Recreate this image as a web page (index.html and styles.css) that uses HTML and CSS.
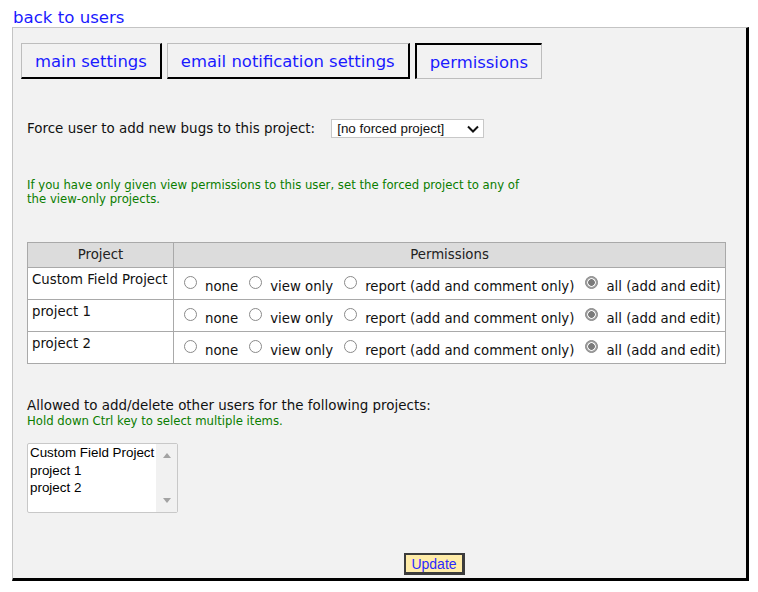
FILE: index.html
```html
<!DOCTYPE html>
<html lang="en">
<head>
<meta charset="utf-8">
<title>Edit user permissions</title>
<link rel="stylesheet" href="styles.css">
</head>
<body>
<div class="back"><a href="#" class="back-link">back to users</a></div>
<div class="panel">
  <div class="tabs">
    <a href="#" class="tab">main settings</a>
    <a href="#" class="tab">email notification settings</a>
    <a href="#" class="tab tab-selected">permissions</a>
  </div>

  <div class="force">
    <span class="force-label">Force user to add new bugs to this project:</span>
    <span class="select-wrap">
      <select class="select">
        <option>[no forced project]</option>
        <option>Custom Field Project</option>
        <option>project 1</option>
        <option>project 2</option>
      </select>
      <svg class="chev" width="12" height="8" viewBox="0 0 12 8"><path d="M1 1.5 L6 6.5 L11 1.5" fill="none" stroke="#111" stroke-width="2"/></svg>
    </span>
  </div>

  <p class="note note-view">If you have only given view permissions to this user, set the forced project to any of the view-only projects.</p>

  <table class="perm">
    <colgroup><col class="col-a"><col class="col-b"></colgroup>
    <thead>
      <tr><th>Project</th><th>Permissions</th></tr>
    </thead>
    <tbody>
      <tr>
        <td class="name">Custom Field Project</td>
        <td class="perms"><label class="opt"><input type="radio" name="p0" class="radio">none</label><label class="opt"><input type="radio" name="p0" class="radio">view only</label><label class="opt"><input type="radio" name="p0" class="radio">report (add and comment only)</label><label class="opt"><input type="radio" name="p0" class="radio" checked>all (add and edit)</label></td>
      </tr>
      <tr>
        <td class="name">project 1</td>
        <td class="perms"><label class="opt"><input type="radio" name="p1" class="radio">none</label><label class="opt"><input type="radio" name="p1" class="radio">view only</label><label class="opt"><input type="radio" name="p1" class="radio">report (add and comment only)</label><label class="opt"><input type="radio" name="p1" class="radio" checked>all (add and edit)</label></td>
      </tr>
      <tr>
        <td class="name">project 2</td>
        <td class="perms"><label class="opt"><input type="radio" name="p2" class="radio">none</label><label class="opt"><input type="radio" name="p2" class="radio">view only</label><label class="opt"><input type="radio" name="p2" class="radio">report (add and comment only)</label><label class="opt"><input type="radio" name="p2" class="radio" checked>all (add and edit)</label></td>
      </tr>
    </tbody>
  </table>

  <div class="allowed">Allowed to add/delete other users for the following projects:</div>
  <div class="note note-ctrl">Hold down Ctrl key to select multiple items.</div>

  <div class="listbox" role="listbox" aria-multiselectable="true">
    <div class="list-items">
      <div class="list-item" role="option">Custom Field Project</div>
      <div class="list-item" role="option">project 1</div>
      <div class="list-item" role="option">project 2</div>
    </div>
    <div class="scrollbar">
      <span class="arrow arrow-up"></span>
      <span class="arrow arrow-down"></span>
    </div>
  </div>

  <div class="actions"><button class="update" type="button">Update</button></div>
</div>
</body>
</html>
```

FILE: styles.css
```css
html, body {
  margin: 0;
  padding: 0;
  background: #ffffff;
}
body {
  font-family: "DejaVu Sans", Verdana, sans-serif;
  font-size: 13.45px;
  color: #111;
  padding-left: 12px;
}
.back {
  height: 27px;
  padding-left: 1px;
  box-sizing: border-box;
  padding-top: 8px;
  font-size: 16.6px;
  line-height: 19px;
}
.back-link {
  color: #1a1aff;
  text-decoration: none;
}
.panel {
  width: 733px;
  height: 550px;
  background: #f2f2f2;
  border-top: 1px solid #c4c4c4;
  border-left: 1px solid #c4c4c4;
  border-right: 3px solid #000;
  border-bottom: 3px solid #000;
}
.tabs {
  display: flex;
  padding: 15px 0 0 8px;
  gap: 5px;
}
.tab {
  box-sizing: border-box;
  height: 36px;
  display: flex;
  align-items: center;
  padding: 2px 13px 0;
  font-size: 16.45px;
  color: #1a1aff;
  text-decoration: none;
  border-top: 1px solid #bdbdbd;
  border-left: 1px solid #bdbdbd;
  border-right: 2px solid #000;
  border-bottom: 2px solid #000;
}
.tab-selected {
  border-top: 2px solid #000;
  border-left: 2px solid #000;
  border-right: 1px solid #bdbdbd;
  border-bottom: 1px solid #bdbdbd;
}
.force {
  display: flex;
  align-items: center;
  margin-top: 40px;
  padding-left: 14px;
}
.force-label {
  line-height: 16px;
}
.select-wrap {
  position: relative;
  margin-left: 16px;
  display: inline-block;
}
.select {
  appearance: none;
  -webkit-appearance: none;
  width: 153px;
  height: 19px;
  border: 1px solid #c8c8c8;
  border-radius: 0;
  background: #fff;
  font-family: "Liberation Sans", Arial, sans-serif;
  font-size: 13.4px;
  color: #111;
  padding: 0 0 0 5px;
  margin: 0;
  display: block;
}
.chev {
  position: absolute;
  right: 5px;
  top: 6px;
  pointer-events: none;
}
.note {
  color: #0a7d00;
  font-size: 11.7px;
  line-height: 13.5px;
}
.note-view {
  margin: 41px 0 0 14px;
  width: 508px;
}
.perm {
  margin: 36px 0 0 14px;
  width: 699px;
  table-layout: fixed;
  border-collapse: collapse;
  line-height: 16px;
  font-size: 13.3px;
}
.col-a {
  width: 146px;
}
.perm th {
  background: #dcdcdc;
  font-weight: normal;
  color: #222;
  padding: 4px 5px;
  border: 1px solid #a9a9a9;
  text-align: center;
}
.perm td {
  background: #fff;
  border: 1px solid #a9a9a9;
  vertical-align: top;
  white-space: nowrap;
}
.perm td.name {
  padding: 4px 2px 4px 4px;
}
.perm td.perms {
  padding: 11px 0 4px 5px;
}
.opt {
  margin-right: 6px;
}
.radio {
  appearance: none;
  -webkit-appearance: none;
  width: 13px;
  height: 13px;
  margin: -4px 8px 2px 5px;
  border: 1px solid #8a8a8a;
  border-radius: 50%;
  background: #fff;
  vertical-align: baseline;
  box-sizing: border-box;
}
.radio:checked {
  border-color: #8a8a8a;
  background: radial-gradient(circle, #7a7a7a 0 3px, #f4f4f4 3.6px 4px, #a0a0a0 4.6px);
}
.allowed {
  margin: 34px 0 0 14px;
  line-height: 16px;
}
.note-ctrl {
  margin: 0 0 0 14px;
  line-height: 14px;
}
.listbox {
  margin: 15px 0 0 14px;
  width: 151px;
  height: 70px;
  box-sizing: border-box;
  border: 1px solid #c8c8c8;
  border-radius: 2px;
  background: #fff;
  display: flex;
}
.list-items {
  flex: 1;
  padding: 0 0 0 2px;
  font-family: "Liberation Sans", Arial, sans-serif;
  font-size: 13.4px;
  line-height: 17.5px;
  color: #000;
  white-space: nowrap;
  overflow: hidden;
}
.scrollbar {
  width: 21px;
  background: #f1f1f1;
  display: flex;
  flex-direction: column;
  justify-content: space-between;
  align-items: center;
  padding: 9px 0 9px;
}
.arrow {
  width: 0;
  height: 0;
  border-left: 4.5px solid transparent;
  border-right: 4.5px solid transparent;
}
.arrow-up {
  border-bottom: 5px solid #a3a3a3;
}
.arrow-down {
  border-top: 5px solid #a3a3a3;
}
.actions {
  margin-top: 40px;
  padding-left: 391px;
}
.update {
  box-sizing: border-box;
  width: 61px;
  height: 22px;
  background: #ffeca8;
  border: 2px solid #3c3c3c;
  border-bottom-width: 3px;
  border-right-width: 3px;
  font-family: "Liberation Sans", Arial, sans-serif;
  font-size: 14px;
  color: #2a2aff;
  padding: 0;
  line-height: 16px;
  cursor: pointer;
}
```
